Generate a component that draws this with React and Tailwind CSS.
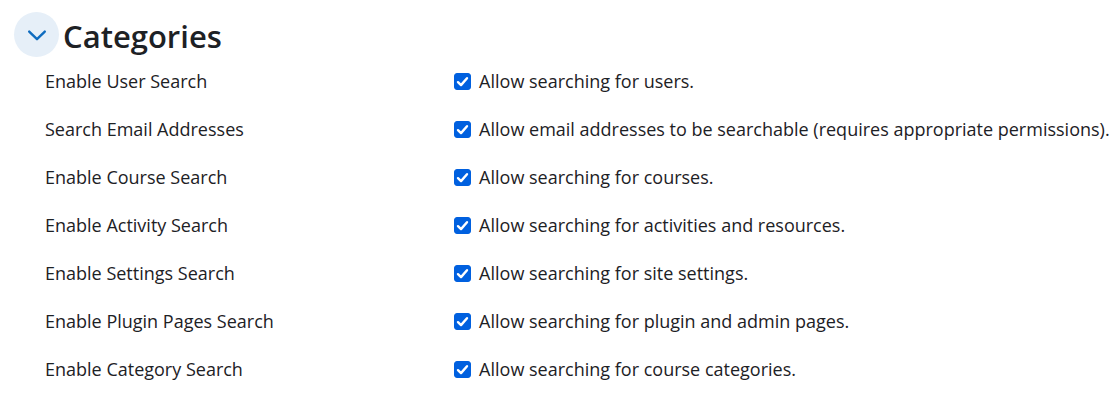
import React, { useState } from 'react';

const SETTINGS = [
  { id: 'users', label: 'Enable User Search', text: 'Allow searching for users.' },
  { id: 'emails', label: 'Search Email Addresses', text: 'Allow email addresses to be searchable (requires appropriate permissions).' },
  { id: 'courses', label: 'Enable Course Search', text: 'Allow searching for courses.' },
  { id: 'activities', label: 'Enable Activity Search', text: 'Allow searching for activities and resources.' },
  { id: 'settings', label: 'Enable Settings Search', text: 'Allow searching for site settings.' },
  { id: 'plugins', label: 'Enable Plugin Pages Search', text: 'Allow searching for plugin and admin pages.' },
  { id: 'categories', label: 'Enable Category Search', text: 'Allow searching for course categories.' },
];

function SettingRow({ item, checked, onChange }) {
  return (
    <div className="grid grid-cols-[minmax(0,13fr)_minmax(0,21fr)] items-center min-h-12">
      <span id={`${item.id}-label`}>{item.label}</span>
      <div className="flex items-center gap-2">
        <span className="grid shrink-0">
          <input
            type="checkbox"
            id={item.id}
            aria-describedby={`${item.id}-label`}
            checked={checked}
            onChange={onChange}
            className="peer col-start-1 row-start-1 size-[17px] appearance-none rounded-[3px] border border-gray-500 bg-white checked:border-[#0060df] checked:bg-[#0060df]"
          />
          <svg
            viewBox="0 0 17 17"
            fill="none"
            stroke="white"
            strokeWidth="2.4"
            strokeLinecap="round"
            strokeLinejoin="round"
            className="pointer-events-none col-start-1 row-start-1 size-[17px] opacity-0 peer-checked:opacity-100"
          >
            <path d="M4 9.2 L7 12.1 L13 5.2" />
          </svg>
        </span>
        <label htmlFor={item.id}>{item.text}</label>
      </div>
    </div>
  );
}

export default function App() {
  const [open, setOpen] = useState(true);
  const [values, setValues] = useState(() => Object.fromEntries(SETTINGS.map(s => [s.id, true])));

  const toggle = (id) => {
    setValues(prev => ({ ...prev, [id]: !prev[id] }));
  };

  return (
    <section className="bg-white pt-3 pb-2 font-['Segoe_UI','Open_Sans',sans-serif] text-[18px] leading-6 text-[#1d2125]">
      <header className="flex items-center gap-1 pl-[14px]">
        <button
          type="button"
          aria-expanded={open}
          aria-label="Categories"
          onClick={() => setOpen(!open)}
          className="flex size-[45px] shrink-0 items-center justify-center rounded-full bg-[#e6eff8] text-[#0f6cbf]"
        >
          <svg viewBox="0 0 20 12" fill="none" stroke="currentColor" strokeWidth="2.4" strokeLinecap="round" strokeLinejoin="round" className={`w-5 h-3 ${open ? '' : '-rotate-90'}`}>
            <path d="M2.2 2.6 L10 10.2 L17.8 2.6" />
          </svg>
        </button>
        <h3 className="pt-1 text-[31px] leading-[41px] font-semibold">Categories</h3>
      </header>

      {open && (
        <div className="pl-[45px]">
          {SETTINGS.map(item => (
            <SettingRow key={item.id} item={item} checked={values[item.id]} onChange={() => toggle(item.id)} />
          ))}
        </div>
      )}
    </section>
  );
}
